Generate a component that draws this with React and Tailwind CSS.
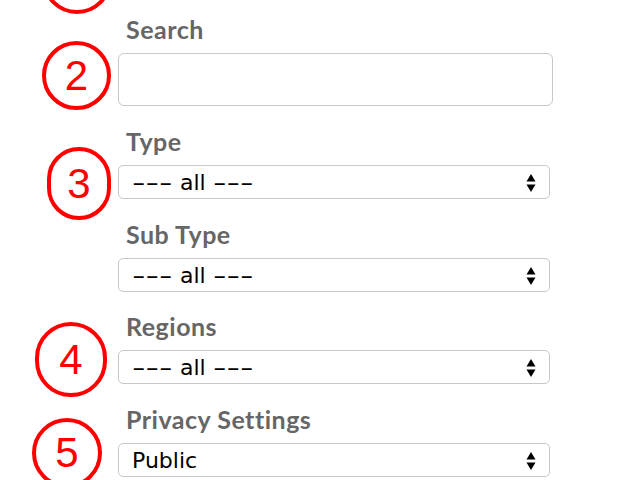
import React from 'react';

function Marker({ n, className }) {
  return (
    <div
      className={`absolute flex items-center justify-center rounded-full border-4 border-[#ff0000] font-['Liberation_Sans',sans-serif] text-[42px] leading-none text-[#ff0000] ${className}`}
    >
      {n}
    </div>
  );
}

function Label({ children, className = '' }) {
  return (
    <label className={`block pl-2 font-['Lato',sans-serif] text-[25px] font-bold leading-[30px] tracking-[0.5px] text-[#666] ${className}`}>
      {children}
    </label>
  );
}

function Select({ children }) {
  return (
    <div className="mt-[9px] flex h-[34px] w-[432px] items-center justify-between rounded-[5px] border border-[#c8c8c8] bg-white pl-[13px] pr-[13px] font-['DejaVu_Sans',sans-serif] text-[22px] text-black">
      <span className="whitespace-pre">{children}</span>
      <svg width="10" height="19" viewBox="0 0 10 19" className="mt-[2px]">
        <path d="M5 0 L9.5 7.5 H0.5 Z M0.5 10.5 H9.5 L5 18 Z" fill="#000" />
      </svg>
    </div>
  );
}

// mac-style long dashes
function Dashes() {
  return <span className="inline-block w-[41px] origin-left scale-x-[1.7]">---</span>;
}

function All() {
  return (
    <>
      <Dashes /> all <Dashes />
    </>
  );
}

export default function App() {
  return (
    <div className="relative h-[480px] w-[640px] overflow-hidden bg-white">
      <Marker className="left-[42px] top-[-56px] h-[70px] w-[70px]" />
      <Marker n="2" className="left-[42px] top-[41px] h-[69px] w-[69px]" />
      <Marker n="3" className="left-[47px] top-[147px] h-[73px] w-[64px]" />
      <Marker n="4" className="left-[35px] top-[322px] h-[75px] w-[72px]" />
      <Marker n="5" className="left-[32px] top-[418px] h-[70px] w-[70px]" />

      <form className="flex flex-col pl-[118px] pt-[14px]">
        <Label>Search</Label>
        <input
          type="text"
          className="mt-[9px] h-[53px] w-[435px] rounded-[6px] border border-[#c8c8c8] bg-white px-3 outline-none"
        />

        <Label className="mt-[20px]">Type</Label>
        <Select><All /></Select>

        <Label className="mt-[20px]">Sub Type</Label>
        <Select><All /></Select>

        <Label className="mt-[19px]">Regions</Label>
        <Select><All /></Select>

        <Label className="mt-[20px]">Privacy Settings</Label>
        <Select>Public</Select>
      </form>
    </div>
  );
}
